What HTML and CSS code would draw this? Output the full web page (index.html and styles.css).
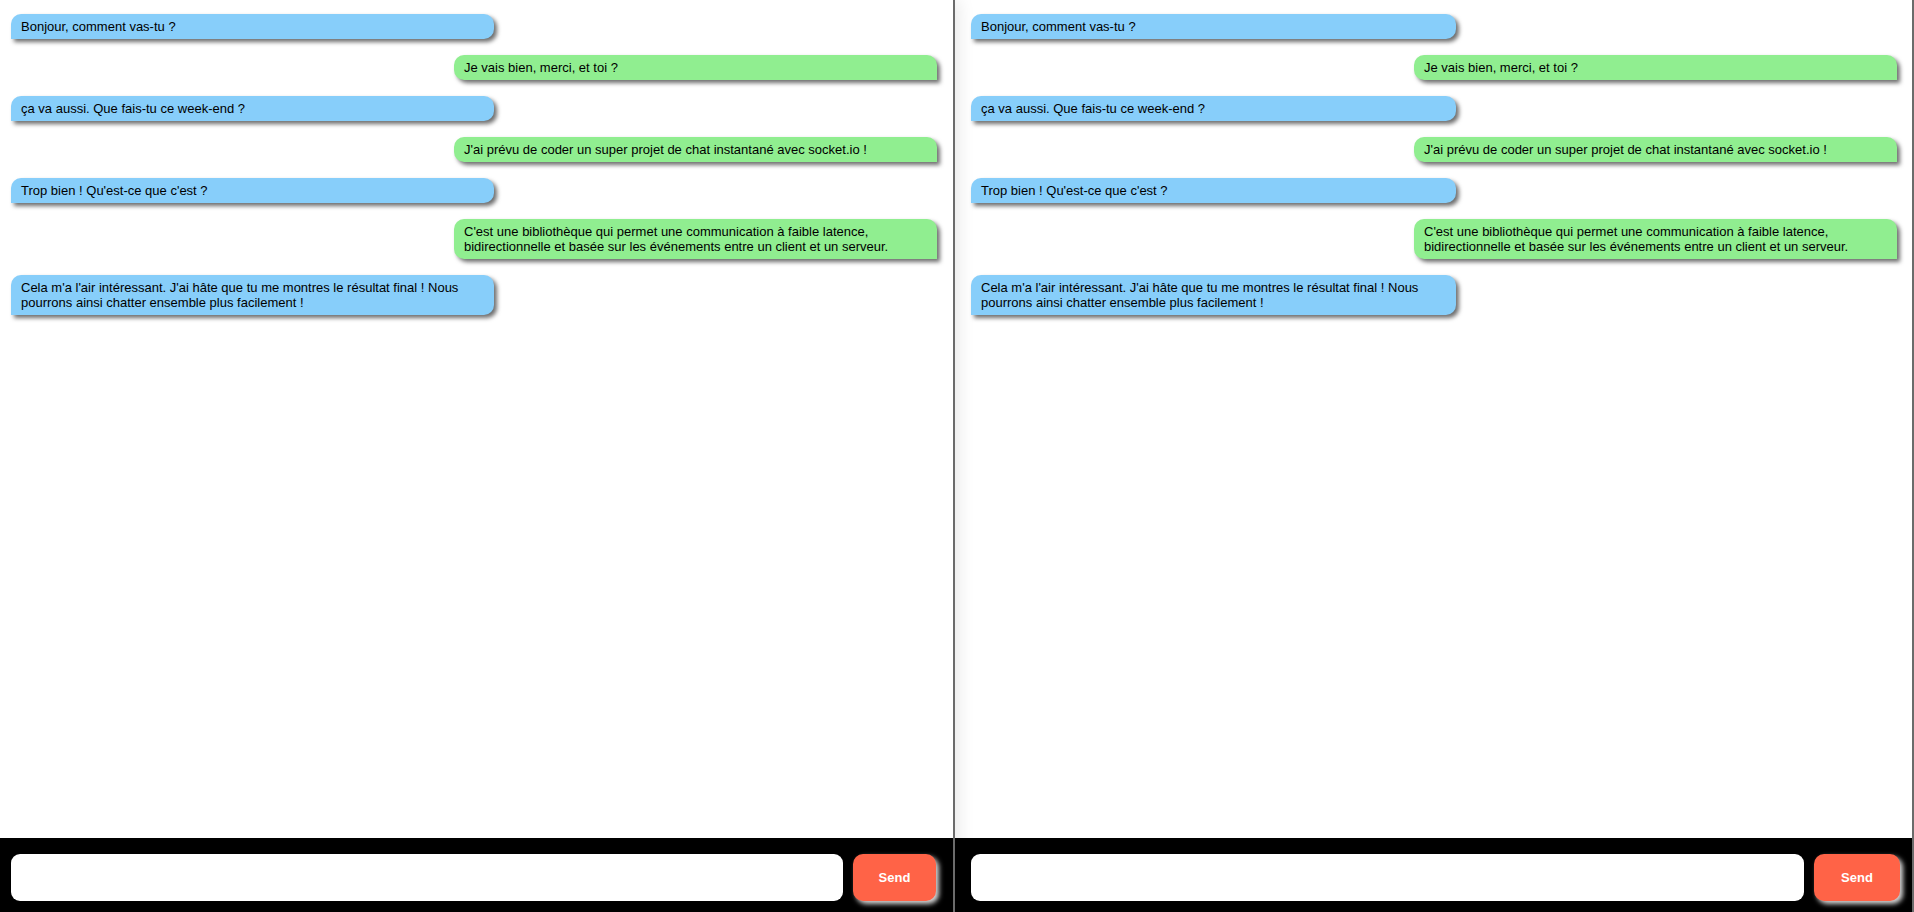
FILE: index.html
```html
<!DOCTYPE html>
<html lang="fr">
<head>
<meta charset="utf-8">
<title>Chat</title>
<link rel="stylesheet" href="styles.css">
</head>
<body>
<div class="app">
  <section class="panel panel--left">
    <div class="messages">
      <div class="msg received">Bonjour, comment vas-tu ?</div>
      <div class="msg sent">Je vais bien, merci, et toi ?</div>
      <div class="msg received">ça va aussi. Que fais-tu ce week-end ?</div>
      <div class="msg sent">J'ai prévu de coder un super projet de chat instantané avec socket.io !</div>
      <div class="msg received">Trop bien ! Qu'est-ce que c'est ?</div>
      <div class="msg sent">C'est une bibliothèque qui permet une communication à faible latence, bidirectionnelle et basée sur les événements entre un client et un serveur.</div>
      <div class="msg received">Cela m'a l'air intéressant. J'ai hâte que tu me montres le résultat final ! Nous pourrons ainsi chatter ensemble plus facilement !</div>
    </div>
    <form class="bar">
      <input class="input" type="text">
      <button class="send" type="button">Send</button>
    </form>
  </section>
  <section class="panel panel--right">
    <div class="messages">
      <div class="msg received">Bonjour, comment vas-tu ?</div>
      <div class="msg sent">Je vais bien, merci, et toi ?</div>
      <div class="msg received">ça va aussi. Que fais-tu ce week-end ?</div>
      <div class="msg sent">J'ai prévu de coder un super projet de chat instantané avec socket.io !</div>
      <div class="msg received">Trop bien ! Qu'est-ce que c'est ?</div>
      <div class="msg sent">C'est une bibliothèque qui permet une communication à faible latence, bidirectionnelle et basée sur les événements entre un client et un serveur.</div>
      <div class="msg received">Cela m'a l'air intéressant. J'ai hâte que tu me montres le résultat final ! Nous pourrons ainsi chatter ensemble plus facilement !</div>
    </div>
    <form class="bar">
      <input class="input" type="text">
      <button class="send" type="button">Send</button>
    </form>
  </section>
</div>
</body>
</html>
```
FILE: styles.css
```css
* { box-sizing: border-box; }
html, body { margin: 0; padding: 0; background: #fff; }
body {
  font-family: "Liberation Sans", Arial, sans-serif;
  font-size: 13px;
  color: #000;
}
.app {
  display: flex;
  height: 912px;
}
.panel {
  display: flex;
  flex-direction: column;
  height: 912px;
}
.panel--left {
  width: 955px;
  border-right: 2px solid #6b6b6b;
  box-shadow: 4px 0 16px rgba(0, 0, 0, 0.09);
}
.panel--right {
  width: 959px;
  border-right: 2px solid #6b6b6b;
}
.messages {
  flex: 1;
  display: flex;
  flex-direction: column;
  align-items: flex-start;
  gap: 16px;
  padding: 14px 16px 0 11px;
}
.panel--right .messages {
  padding: 14px 15px 0 16px;
}
.msg {
  width: 483px;
  padding: 5px 10px;
  line-height: 15px;
  box-shadow: 3px 3px 4px #6e6e6e;
}
.received {
  background: #87cefa;
  border-radius: 10px 10px 10px 0;
}
.sent {
  align-self: flex-end;
  background: #90ee90;
  border-radius: 10px 10px 0 10px;
}
.panel--right .received { width: 485px; }
.bar {
  margin: 0;
  height: 74px;
  background: #000;
  display: flex;
  align-items: flex-start;
  gap: 10px;
  padding: 16px 17px 0 11px;
}
.panel--right .bar {
  padding: 16px 12px 0 16px;
}
.input {
  flex: 1;
  height: 47px;
  border: none;
  border-radius: 9px;
  background: #fff;
  outline: none;
  font: inherit;
  padding: 0 10px;
}
.send {
  width: 83px;
  height: 47px;
  border: none;
  border-radius: 10px;
  background: #ff6347;
  color: #fff;
  font-family: "Liberation Sans", Arial, sans-serif;
  font-weight: bold;
  font-size: 13px;
  box-shadow: 3px 3px 5px #d8d8d8;
}
.panel--right .send { width: 86px; }
```
